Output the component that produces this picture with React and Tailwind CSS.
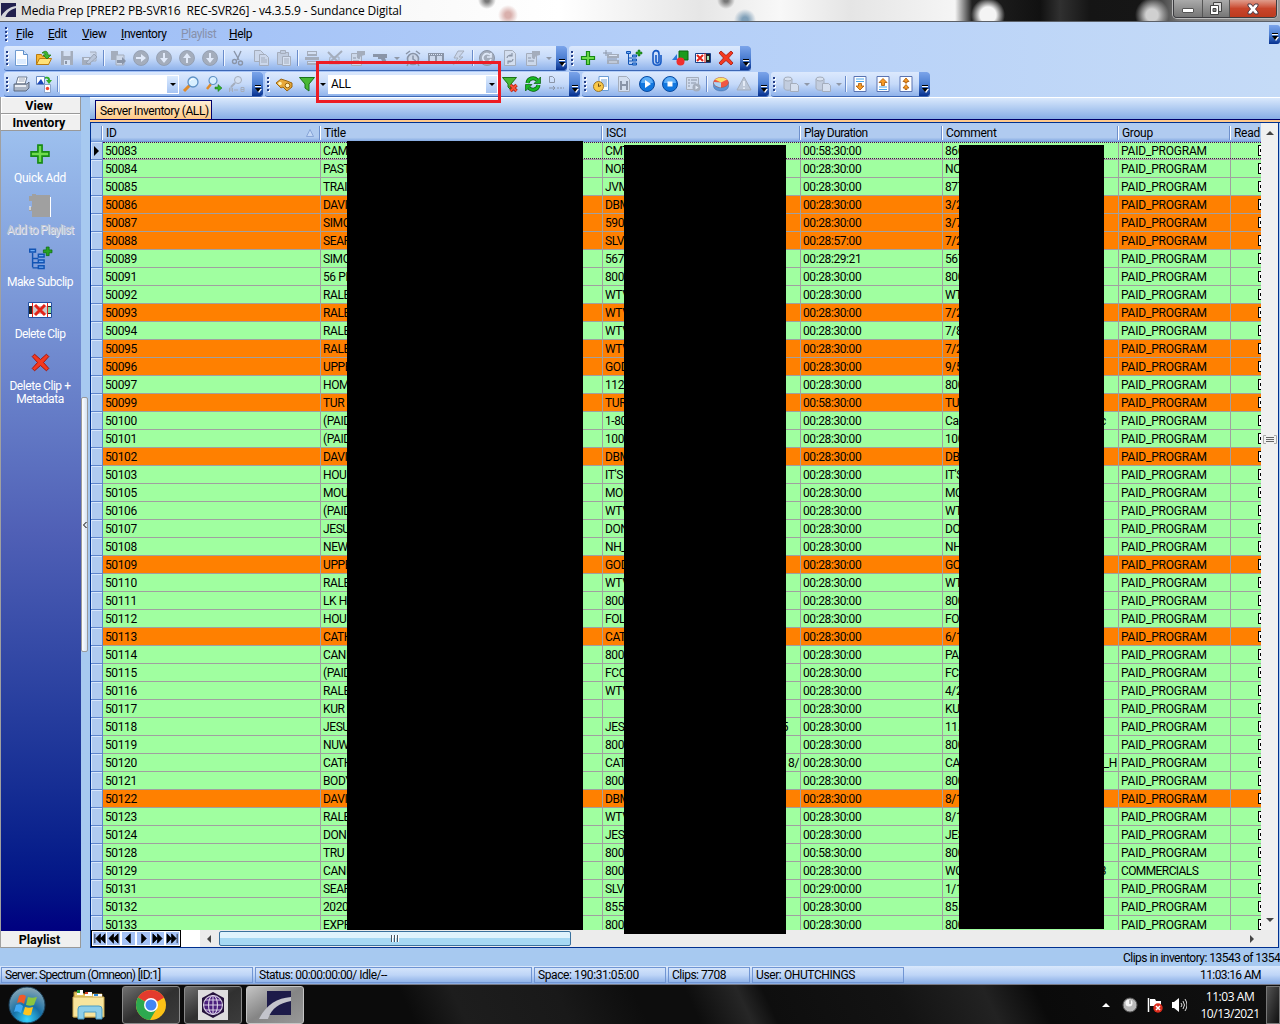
import React from "react";

const G = "#a4adbc";
const D = "#8a95a8";

const ICONS = {
  new: <><path d="M2.500 .5h8l4 4v11h-12z" fill="#fff" stroke="#6f9bd0" /><path d="M4 9h9v5H4z" fill="#dcecff" /><path d="M10.500 .5v4h4" fill="#cfe2fa" stroke="#5b8cc8" /></>,
  open: <><path d="M.5 14.500v-10h5l1 2h6v8z" fill="#f7b733" stroke="#b97b10" /><path d="M.5 14.500l3-6h12l-3 6z" fill="#ffe277" stroke="#b97b10" /><path d="M6 3c3-3 6-2 6 2h3l-4 4-4-4h2c0-2-1-2-3-2z" fill="#3fb52c" stroke="#17730f" strokeWidth=".7" /></>,
  save: <><path d="M2 1h12v14H2z" fill={G} /><path d="M4.500 1h7v5h-7zM5 10h6v5H5z" fill="#d3dff2" /><path d="M6 11h2v3H6z" fill={D} /></>,
  saveas: <><path d="M0 7h9v8H0z" fill={G} /><path d="M2 8h5v2H2z" fill="#d8e3f4" /><path d="M8 2h6v9H9" fill="#cbd7ea" stroke={G} /><path d="M4 13l8-9 3 3-8 7z" fill="#b9c5d9" stroke={D} strokeWidth=".7" /></>,
  copyout: <><path d="M1 1h7v9H1z" fill={G} /><path d="M6 5h8v10H6z" fill="#cdd8e9" stroke={G} /><path d="M7 10h5V7l4 4-4 4v-2H7z" fill={D} /></>,
  right: <><circle cx="8" cy="8" r="7.500" fill={G} stroke={D} strokeWidth=".7" /><path d="M3 7h5V4l5 4-5 4V9H3z" fill="#e1eafa" /></>,
  down: <><circle cx="8" cy="8" r="7.500" fill={G} stroke={D} strokeWidth=".7" /><path d="M7 3h2v5h3l-4 5-4-5h3z" fill="#e1eafa" /></>,
  up: <><circle cx="8" cy="8" r="7.500" fill={G} stroke={D} strokeWidth=".7" /><path d="M7 13h2V8h3L8 3 4 8h3z" fill="#e1eafa" /></>,
  cut: <g fill="none" stroke={D} strokeWidth="1.400"><path d="M4 1l5 9M11 1L7 10" /><circle cx="4.500" cy="11.500" r="2" /><circle cx="10.500" cy="13" r="2" /></g>,
  copy: <g fill="#cbd7eb" stroke={G}><path d="M1.500 .5h6l3 3v8h-9z" /><path d="M6.500 4.500h6l3 3v8h-9z" /><path d="M8 8h4M8 10h6M8 12h6" /></g>,
  paste: <g fill="#c0ccdf" stroke={G}><path d="M1.500 2.500h11v12h-11z" /><path d="M4.500 .5h5v3h-5z" /><path d="M6.500 6.500h8v9h-8z" fill="#d5e0f1" /><path d="M8 9h5M8 11h5M8 13h5" /></g>,
  printer0: <><path d="M3 1h10v5H3zM1 7h14v3H1zM3 11h10v4H3z" fill={G} /><path d="M4 2h8v2H4zM4 12h8v1H4z" fill="#d3dff2" /></>,
  xedit: <g stroke={G} strokeWidth="2" fill="none"><path d="M1 2l12 12M15 1L3 12" /><path d="M3 7h9v7H2z" strokeWidth="1" /></g>,
  card: <><path d="M1.500 3.500h10v12h-10z" fill="#ccd8ea" stroke={G} /><path d="M3 8h3M3 11h6M8 8h2" stroke={D} /><path d="M7 1h8v4l-4 1-2 3-2-1z" fill={G} /></>,
  gun: <path d="M0 4h14v4h-2l2 5h-4L8 9H5V7H0z" fill={D} />,
  clock: <><circle cx="8" cy="9" r="5.500" fill="#cbd6e8" stroke={D} strokeWidth="1.600" /><path d="M1 4l4-3M11 1l4 3M8 5.500V9l3 2M3 14l-1 2M13 14l1 2" stroke={D} strokeWidth="1.500" fill="none" /></>,
  film: <><path d="M0 3h16v10H0z" fill={D} /><path d="M2 6h5v5H2zM9 6h5v5H9z" fill="#cbd7eb" /><path d="M1 4.500h14" stroke="#dbe6f8" strokeDasharray="1 1" /></>,
  bolt: <path d="M13 1H7L3 8h4l-5 7L12 7H8z" fill="#cbd7eb" stroke={G} />,
  refresh0: <><circle cx="8" cy="8" r="7.500" fill={G} stroke={D} /><path d="M11 5a4.200 4.200 0 1 0 1 4M12 3v4H8" stroke="#dfe9f9" strokeWidth="1.700" fill="none" /></>,
  docref: <><path d="M2.500 .5h8l3 3v12h-11z" fill="#d3deef" stroke={G} /><path d="M5 8a3 3 0 0 1 5-2M11 9a3 3 0 0 1-5 2M10 3v3H7M6 14v-3h3" fill="none" stroke={D} strokeWidth="1.200" /></>,
  plus: <path d="M6.500 1.500h3v5h5v3h-5v5h-3v-5h-5v-3h5z" fill="#6fdc4c" stroke="#178a14" strokeWidth="1.200" />,
  list0: <><path d="M4 4h12v4H4zM4 10h12v4H4z" fill={G} /><path d="M6 5.500h8M6 12h8" stroke="#dce6f6" /><path d="M3 0v6M0 3h9M4 9h10" stroke={D} /></>,
  tree: <><path d="M2.500 4v10M2.500 8h4M2.500 11h4M2.500 14.500h4" stroke="#1254b4" fill="none" /><path d="M.5 1.500h4v2h-4zM6.500 5h4v2h-4zM6.500 9h4v2h-4zM6.500 13h4v2h-4z" fill="#6caaf5" stroke="#1254b4" /><path d="M12 0h2v2h2v2h-2v2h-2V4h-2V2h2z" fill="#27a321" stroke="#0d6a0d" strokeWidth=".5" /></>,
  clip: <path d="M12 5v6.500c0 5-8 5-8 0V4c0-4.500 6-4.500 6 0v7.500c0 2-3 2-3 0V5" fill="none" stroke="#1559c4" strokeWidth="1.600" />,
  shapes: <><path d="M0 10l5-6v6z" fill="#2b78d9" /><path d="M7 1h9v9H7z" fill="#1a9a1c" stroke="#0b650d" /><circle cx="8.500" cy="11.500" r="4" fill="#ef2f2f" /></>,
  delclip: <><path d="M.5 3.500h15v9H.5z" fill="#fff" stroke="#173e87" /><path d="M11 4h4v8h-4z" fill="#222" /><path d="M12 6h2v4h-2z" fill="#9fe2b1" /><path d="M2 5l6 6M8 5l-6 6" stroke="#e32419" strokeWidth="2" /><path d="M10 3v10" stroke="#d21a10" /></>,
  x: <path d="M3 1l5 4.500L13 1l2 2-4.500 5L15 13l-2 2-5-4.500L3 15l-2-2 4.500-5L1 3z" fill="#f5391f" stroke="#a51408" strokeWidth=".8" />,
  print: <><path d="M5 1h9l-2 7H3z" fill="#fff" stroke="#6c7a90" /><path d="M1 8h13l2-2v6l-3 3H1z" fill="#aab4c4" stroke="#4a566b" strokeWidth=".8" /><path d="M2 9h11v2H2z" fill="#e9edf4" /><path d="M6 3h6M5.500 5h6" stroke="#9aa5b8" /></>,
  convert: <><path d="M.5 .5h8v8h-8z" fill="#fff" stroke="#6789c4" /><path d="M1 8l4-5 3 5z" fill="#1b47b8" /><path d="M8.500 8.500h6v8h-6z" fill="#fff" stroke="#8ba3c9" /><circle cx="11.500" cy="12.500" r="1.700" fill="#f2432e" /><path d="M9 1c4-1 5 1 5 3h2l-3 4-3-4h2c0-1-1-2-3-1z" fill="#2fac25" /></>,
  search: <><path d="M7 9l-6 6" stroke="#e08a28" strokeWidth="3" /><circle cx="10" cy="6" r="5" fill="#d8efff" stroke="#5f91c4" strokeWidth="1.300" /><path d="M7 5c1-2 3-2 4-2" stroke="#fff" fill="none" /></>,
  searchnext: <><path d="M5 8l-4 5" stroke="#e08a28" strokeWidth="2.500" /><circle cx="7" cy="4.500" r="4" fill="#d8efff" stroke="#5f91c4" strokeWidth="1.200" /><path d="M9 11h3V8.500l4 3.500-4 3.500V13H9z" fill="#35b32c" stroke="#0d6a0d" strokeWidth=".5" /></>,
  searchab: <><path d="M6 7l-4 4" stroke={G} strokeWidth="2" /><circle cx="9" cy="4" r="3.500" fill="#d4e0f2" stroke={G} /><path d="M.5 16v-4h3v4M.5 14h3M5 14h4M12 11.500h3v4h-3zM12 13.500h3" fill="none" stroke={G} /></>,
  binoc: <><path d="M0 7l5-4 6 2 5 2v4l-5 4-4-4-2 1z" fill="#e8a93a" stroke="#9a6410" /><circle cx="11.500" cy="9.500" r="2.300" fill="#fff2c0" stroke="#9a6410" /><circle cx="4" cy="7.500" r="1.800" fill="#fff0b0" /></>,
  funnel: <path d="M.5 1.500h15L10 8v7l-4-3V8z" fill="#49b834" stroke="#1b7318" />,
  funnelx: <><path d="M.5 1.500h14L9 8v6l-3-3V8z" fill="#49b834" stroke="#1b7318" /><path d="M8.500 9l6 6M14.500 9l-6 6" stroke="#a51408" strokeWidth="3.400" /><path d="M8.500 9l6 6M14.500 9l-6 6" stroke="#fa5138" strokeWidth="2" /></>,
  refresh: <><path d="M2.500 7a5.500 5.500 0 0 1 9.500-3M13.500 9a5.500 5.500 0 0 1-9.500 3" stroke="#075c0b" strokeWidth="4" fill="none" /><path d="M2.500 7a5.500 5.500 0 0 1 9.500-3M13.500 9a5.500 5.500 0 0 1-9.500 3" stroke="#19b924" strokeWidth="2.500" fill="none" /><path d="M15.500 1v6.500H9zM.5 15V8.500H7z" fill="#19b924" stroke="#075c0b" strokeWidth=".7" /></>,
  dots0: <path d="M1.500 .5h3l2 2v4h-5zM1 12h6M5 10l2 2-2 2M9 12h2M12 12h2M15 12h1" stroke={D} fill="none" />,
  clockdoc: <><path d="M6 .5h9.500v14H6z" fill="#fff" stroke="#6b9cd5" /><path d="M8 4h6M8 6h6M10 8h4M11 10h3" stroke="#6b9cd5" /><circle cx="5.500" cy="10.500" r="5" fill="#fac848" stroke="#98742a" /><path d="M5.500 7.500v3l2.500-1" stroke="#704b12" fill="none" /></>,
  filmdoc: <><path d="M2.500 .5h8l3 3v12h-11z" fill="#d3deef" stroke={G} /><path d="M5 5v9M11 5v9M5 9h6" stroke={D} strokeWidth="2" /></>,
  play: <><circle cx="8" cy="8" r="7.500" fill="#1277df" stroke="#0a4aa0" /><path d="M2 7a6 6 0 0 1 12 0z" fill="#5eaef7" /><path d="M6 4l6 4-6 4z" fill="#fff" /></>,
  stop: <><circle cx="8" cy="8" r="7.500" fill="#1277df" stroke="#0a4aa0" /><path d="M2 7a6 6 0 0 1 12 0z" fill="#5eaef7" /><path d="M5.500 5.500h5v5h-5z" fill="#fff" /></>,
  listplay: <><path d="M1.500 1.500h12v12h-12z" fill="#d0dbed" stroke={G} /><path d="M3 4h2M6 4h6M3 7h2M6 7h5M3 10h2" stroke={D} /><circle cx="11.500" cy="11.500" r="4" fill={G} /><path d="M10.500 9.500l3 2-3 2z" fill="#e5edfa" /></>,
  pie: <><path d="M.5 6.500v4c1 6 14 6 15 0v-4z" fill="#5a93d6" stroke="#46689c" strokeWidth=".5" /><ellipse cx="8" cy="6.500" rx="7.500" ry="5" fill="#f05742" stroke="#9a5540" strokeWidth=".5" /><path d="M8 6.500L2 3.500C5 1 11 1 14 3.500z" fill="#f8e36a" /><path d="M8 6.500L.7 6c0 3 3 5 7.300 5.400z" fill="#a9d3f7" /></>,
  warn: <><path d="M8 1l7 13H1z" fill="#bcc7d8" stroke={G} /><path d="M8 5v5M8 11.500v1.500" stroke="#e8effa" strokeWidth="1.800" /></>,
  db: <><path d="M1 3v9c0 3 8 3 8 0V3" fill="#c2cddf" stroke={G} /><ellipse cx="5" cy="3" rx="4" ry="2" fill="#d7e1f0" stroke={G} /><path d="M7.500 7.500h6l2 2v6h-8z" fill="#d5dfef" stroke={G} /></>,
  pgdown: <><path d="M2 .5h12v15H2z" fill="#fff" stroke="#5873b2" /><path d="M4 3h8M4 5.500h8" stroke="#4aa6ec" /><path d="M6.500 7.500h3V10h2.500l-4 4-4-4h2.500z" fill="#f89b24" stroke="#a85808" strokeWidth=".8" /></>,
  pgup: <><path d="M2 .5h12v15H2z" fill="#fff" stroke="#5873b2" /><path d="M4 11h8M4 13.500h8" stroke="#4aa6ec" /><path d="M6.500 9.500h3V6.500h2.500l-4-4-4 4h2.500z" fill="#f89b24" stroke="#a85808" strokeWidth=".8" /></>,
  pgboth: <><path d="M2 .5h12v15H2z" fill="#fff" stroke="#5873b2" /><path d="M8 2l3 3.500H9V7H7V5.500H5zM8 8.500l3 3.500H9v1.500H7V12H5z" fill="#f89b24" stroke="#a85808" strokeWidth=".8" /></>,
};

const Icon = ({ n, size = 16 }) => (
  <svg width={size} height={size} viewBox="0 0 16 16" className="shrink-0 overflow-visible">{ICONS[n]}</svg>
);

const Grip = () => (
  <span className="ml-[2px] flex shrink-0 flex-col gap-[2px] w-[2px]">
    {[0, 1, 2, 3].map((i) => <span key={i} className="h-[2px] w-[2px] bg-[#27418a] shadow-[1px_1px_0_#fff]" />)}
  </span>
);

const Caret = ({ dark }) => (
  <span className="flex w-[9px] shrink-0 justify-center">
    <span className={dark ? "h-0 w-0 border-x-[3px] border-t-[3px] border-x-transparent border-t-black" : "h-0 w-0 border-x-[3px] border-t-[3px] border-x-transparent border-t-[#8f98a8]"} />
  </span>
);

const Cap = () => (
  <span className="flex h-full w-[11px] shrink-0 flex-col items-center justify-end gap-px rounded-r-[3px] bg-linear-to-b from-[#7ba4ea] via-[#4d7fd2] to-[#06308f] pb-[3px]">
    <span className="h-[2px] w-[6px] border-b border-white bg-black" />
    <svg width="8" height="5"><path d="M2 1h6L5 5z" fill="#fff" /><path d="M1 0h6L4 4z" fill="#000" /></svg>
  </span>
);

function Items({ list }) {
  return list.map((n, i) => {
    if (n === "|") return <span key={i} className="mx-[1.5px] h-[16px] w-[2px] shrink-0 border-l border-[#6a8ccb] bg-[#f1f7ff]" />;
    if (n === "v") return <Caret key={i} />;
    return <span key={i} className="flex w-[23px] shrink-0 justify-center"><Icon n={n} /></span>;
  });
}

const Combo = ({ text }) => (
  <span className="flex h-[19px] grow items-center bg-white">
    <span className="grow pl-[3px]">{text}</span>
    <span className="mr-px flex h-[17px] w-[11px] items-center justify-center bg-linear-to-b from-[#dcebfe] to-[#a6c4f3]"><Caret dark /></span>
  </span>
);

const Bar = ({ className, children }) => (
  <div className={"flex h-[25px] shrink-0 items-center overflow-hidden rounded-[3px] border-b border-[#3d67b5] bg-linear-to-b from-[#dce9fd] via-[#c6daf9] to-[#90b3eb] " + className}>
    <Grip />
    {children}
    <span className="grow" />
    <Cap />
  </div>
);

// id | highlighted | title | isci | duration | comment | isci tail | comment tail
const ROWS = `50083||CAM|CMT|00:58:30:00|866
50084||PAST|NOR|00:28:30:00|NOR
50085||TRAI|JVM|00:28:30:00|877
50086|o|DAVI|DBM|00:28:30:00|3/2
50087|o|SIMO|590|00:28:30:00|3/7
50088|o|SEAR|SLV|00:28:57:00|7/2
50089||SIMO|567|00:28:29:21|567
50091||56 PE|800|00:28:30:00|800
50092||RALE|WTV|00:28:30:00|WT
50093|o|RALE|WTV|00:28:30:00|7/2
50094||RALE|WTV|00:28:30:00|7/8
50095|o|RALE|WTV|00:28:30:00|7/2
50096|o|UPPE|GOD|00:28:30:00|9/5
50097||HOM|112|00:28:30:00|800
50099|o|TUR|TUR|00:58:30:00|TUR
50100||(PAID|1-80|00:28:30:00|Cal||c
50101||(PAID|100|00:28:30:00|100
50102|o|DAVI|DBM|00:28:30:00|DBI
50103||HOU|IT'S|00:28:30:00|IT'S
50105||MOU|MOI|00:28:30:00|MOI
50106||(PAID|WTV|00:28:30:00|WT
50107||JESU|DON|00:28:30:00|DOI
50108||NEW|NH_|00:28:30:00|NH_
50109|o|UPPE|GOD|00:28:30:00|GOI
50110||RALE|WTV|00:28:30:00|WT
50111||LK H|800|00:28:30:00|800
50112||HOU|FOL|00:28:30:00|FOI
50113|o|CATH|CAT|00:28:30:00|6/1
50114||CANI|800|00:28:30:00|PAI
50115||(PAID|FCC|00:28:30:00|FCI
50116||RALE|WTV|00:28:30:00|4/2
50117||KUR||00:28:30:00|KUI
50118||JESU|JES|00:28:30:00|11.|5
50119||NUW|800|00:28:30:00|800
50120||CATH|CAT|00:28:30:00|CAT|8/|_H
50121||BODY|800|00:28:30:00|800
50122|o|DAVI|DBM|00:28:30:00|8/1
50123||RALE|WTV|00:28:30:00|8/1
50124||DON|JES|00:28:30:00|JES
50128||TRU|800|00:58:30:00|800
50129||CANI|800|00:28:30:00|WO||3
50131||SEAR|SLV|00:29:00:00|1/1
50132||2020|855|00:28:30:00|855
50133||EXPR|800|00:28:30:00|800`.split("\n").map((l) => l.split("|"));

const Cell = ({ w, children, tail, tailPad = "pr-0" }) => (
  <div className={"flex h-full shrink-0 items-center justify-between overflow-hidden border-r border-b border-[#a0a0a0] pl-[2px] whitespace-nowrap " + w}>
    <span>{children}</span>
    {tail && <span className={tailPad}>{tail}</span>}
  </div>
);

function Row({ r, i }) {
  return (
    <div className="flex h-[18px] shrink-0">
      <div className="flex w-[12px] shrink-0 items-center justify-center border-r border-b border-[#5f86cc] bg-[#b0cbf0] shadow-[inset_1px_1px_0_#d9e8fc]">
        {i === 0 && <span className="h-0 w-0 border-y-[5px] border-l-[5px] border-y-transparent border-l-black" />}
      </div>
      <div className={"relative flex grow overflow-hidden " + (r[1] ? "bg-[#ff8000]" : "bg-[#a0ffa0]")}>
        <Cell w="w-[218px]">{r[0]}</Cell>
        <Cell w="w-[282px]">{r[2]}</Cell>
        <Cell w="w-[198px]" tail={r[6]} tailPad={r[6] === "5" ? "pr-[12px]" : "pr-[1px]"}>{r[3]}</Cell>
        <Cell w="w-[142px]">{r[4]}</Cell>
        <Cell w="w-[176px]" tail={r[7]} tailPad={r[7] === "_H" ? "pr-[1px]" : "pr-[12px]"}>{r[5]}</Cell>
        <Cell w="w-[112px] tracking-[-0.2px]">{r[0] === "50129" ? <span className="tracking-[-0.6px]">COMMERCIALS</span> : "PAID_PROGRAM"}</Cell>
        <div className="flex grow items-center justify-end border-b border-[#a0a0a0]">
          <span className="flex h-[11px] w-[3px] items-center justify-end border-y border-l border-black bg-white"><span className="h-[3px] w-px bg-black" /></span>
        </div>
        {i === 0 && <div className="absolute inset-x-0 top-0 h-[17px] border-y border-dotted border-[#500050]" />}
      </div>
    </div>
  );
}

const Head = ({ w, children, sort }) => (
  <div className={"flex h-full shrink-0 items-center overflow-hidden pl-[3px] whitespace-nowrap " + w}>
    <span className="grow">{children}</span>
    {sort && <svg width="8" height="8" className="mr-[5px]"><path d="M4 .5L7.500 7.500h-7z" fill="#c3d8f6" stroke="#7c9ad0" strokeWidth=".8" /></svg>}
    <span className="h-[14px] w-[2px] shrink-0 border-l border-[#6d8fcb] bg-white" />
  </div>
);

const Action = ({ icon, children }) => (
  <div className="flex h-[52px] shrink-0 flex-col items-center">
    <div className="flex h-[24px] shrink-0 items-center">{icon}</div>
    <div className="mt-[6px] shrink-0 text-center leading-[13px] whitespace-pre text-white">{children}</div>
  </div>
);

const NAV = ["M2 1v10M8 1L3 6l5 5zM13 1L8 6l5 5z", "M7 1L2 6l5 5zM12 1L7 6l5 5z", "M9 1L4 6l5 5z", "M5 1l5 5-5 5z", "M2 1l5 5-5 5zM7 1l5 5-5 5z", "M1 1l5 5-5 5zM6 1l5 5-5 5zM12 1v10"];

const Panel = ({ w, children }) => (
  <div className={"flex h-[16px] shrink-0 items-center border border-[#7095d3] pl-[3px] whitespace-pre " + w}>{children}</div>
);

const Swoosh = ({ className }) => (
  <svg viewBox="0 0 32 28" className={className}>
    <path d="M8 0h24v24H8z" fill="#1d1b49" />
    <path d="M0 28C7 14 18 7 32 6v4C20 12 12 18 9 28z" fill="#c3c4cb" />
  </svg>
);

const TaskButton = ({ active, children }) => (
  <div className={"flex h-[38px] w-[58px] items-center justify-center rounded-[3px] border " + (active ? "border-[#c5c5c5] bg-linear-to-br from-[#c4c4c4] via-[#858585] to-[#989898]" : "border-[#8a8a8a] bg-linear-to-br from-[#707070] via-[#303030] to-[#3c3c3c]")}>{children}</div>
);

export default function App() {
  return (
    <div className="relative flex h-[1024px] w-[1280px] flex-col overflow-hidden bg-[#a7c9f0] font-['Roboto','Liberation_Sans',sans-serif] text-[12px] leading-[14px] tracking-[-0.4px] text-black">
      {/* Title bar */}
      <div className="flex h-[22px] shrink-0 justify-between border-b border-[#5b6068] bg-[radial-gradient(circle_at_988px_15px,#f4f4f4_8px,transparent_17px),radial-gradient(circle_at_1152px_15px,#d0d0d0_6px,transparent_17px),radial-gradient(circle_at_745px_20px,#7f9fb8_3px,transparent_11px),radial-gradient(circle_at_508px_15px,#d9b0ac_3px,transparent_10px),radial-gradient(circle_at_487px_0px,#777_2px,transparent_9px),radial-gradient(circle_at_726px_0px,#777_2px,transparent_9px),linear-gradient(90deg,#dcdcdc_0,#f2f2f2_80px,#f9f9f9_400px,#fff_560px,#e6e6e6_700px,#f8f8f8_780px,#e5e5e5_850px,#f5f5f5_955px,#222_972px,#111_1040px,#303030_1060px,#151515_1090px,#161616_1140px,#777_1180px,#999_1280px)]">
        <div className="flex items-center">
          <svg width="16" height="16" viewBox="0 0 16 16"><path d="M1 0h15v14H1z" fill="#22204e" /><path d="M0 15C4 8 9 4 16 3v2C10 7 7 9 5 15z" fill="#d5d6dc" /></svg>
          <span className="ml-[5px] font-['Open_Sans','Noto_Sans',sans-serif] text-[12px] tracking-[-0.14px] whitespace-pre">Media Prep [PREP2 PB-SVR16  REC-SVR26] - v4.3.5.9 - Sundance Digital</span>
        </div>
        <div className="mr-[3px] flex h-[18px] w-[104px] overflow-hidden rounded-b-[4px] border border-t-0 border-[#3c3c40] shadow-[0_0_0_1px_#bbb]">
          <div className="flex w-[29px] items-end justify-center border-r border-[#555] bg-linear-to-b from-[#aaa] to-[#767676] pb-[4px]"><span className="h-[5px] w-[12px] rounded-[1px] border border-[#555] bg-white" /></div>
          <div className="flex w-[27px] items-center justify-center border-r border-[#555] bg-linear-to-b from-[#aaa] to-[#767676]">
            <svg width="14" height="13"><path d="M4.500 .5h8v9h-8z" fill="#ddd" stroke="#444" /><path d="M1.500 3.500h8v9h-8z" fill="#fff" stroke="#444" /><path d="M4 6.500h3v3H4z" fill="#888" stroke="#444" /></svg>
          </div>
          <div className="flex grow items-center justify-center bg-linear-to-b from-[#df9c8c] via-[#c8452b] to-[#bc3a1e]">
            <svg width="14" height="12" viewBox="0 0 14 12"><path d="M2 1h3l2 2.500L9 1h3v2L9.500 6 12 9v2H9L7 8.500 5 11H2V9l2.500-3L2 3z" fill="#fff" stroke="#4d3b46" /></svg>
          </div>
        </div>
      </div>

      {/* Menu and toolbars */}
      <div className="flex h-[75px] shrink-0 flex-col bg-linear-to-r from-[#9dbdf6] via-[#b3cef8] to-[#c5dbf7]">
        <div className="flex h-[24px] items-center justify-between">
          <div className="flex items-center">
            <span className="ml-[3px]"><Grip /></span>
            {[["F", "ile", "ml-[9px] w-[32px]"], ["E", "dit", "w-[34px]"], ["V", "iew", "w-[39px]"], ["I", "nventory", "w-[60px]"], ["P", "laylist", "w-[48px] text-[#8791ab]"], ["H", "elp", ""]].map(([a, b, c]) => (
              <span key={a} className={c + " tracking-[-0.4px]"}><u>{a}</u>{b}</span>
            ))}
          </div>
          <div className="h-[19px]"><Cap /></div>
        </div>
        <div className="flex h-[26px] gap-[2px] pl-[4px]">
          <Bar className="w-[563px]"><span className="w-px shrink-0" />
            <Items list={["new", "open", "save", "saveas", "|", "copyout", "right", "down", "up", "down", "|", "cut", "copy", "paste", "|", "printer0", "xedit", "card", "gun", "v", "clock", "film", "bolt", "|", "refresh0", "docref", "card", "v"]} />
          </Bar>
          <Bar className="w-[182px]"><span className="w-[3px] shrink-0" /><Items list={["plus", "list0", "tree", "clip", "shapes", "delclip", "x"]} /></Bar>
        </div>
        <div className="flex h-[25px] gap-[2px] pl-[4px]">
          <Bar className="w-[259px]"><span className="w-px shrink-0" /><Items list={["print", "convert", "|"]} />
            <span className="flex w-[119px] shrink-0"><Combo /></span>
            <Items list={["search", "searchnext", "searchab"]} />
          </Bar>
          <Bar className="w-[315px]"><span className="w-[3px] shrink-0" /><Items list={["binoc", "funnel"]} /><Caret dark />
            <span className="ml-px flex w-[170px] shrink-0"><Combo text="ALL" /></span>
            <Items list={["funnelx", "refresh", "dots0"]} />
          </Bar>
          <Bar className="w-[187px]"><span className="w-[3px] shrink-0" /><Items list={["clockdoc", "filmdoc", "play", "stop", "listplay", "|", "pie", "warn"]} /></Bar>
          <Bar className="w-[159px]"><span className="w-[4px] shrink-0" /><Items list={["db", "v", "db", "v", "|", "pgdown", "pgup", "pgboth"]} /></Bar>
        </div>
      </div>

      {/* Main area */}
      <div className="flex h-[851px] shrink-0">
        <div className="flex w-[81px] shrink-0 flex-col border-l border-[#a0a0a0]">
          {["View", "Inventory"].map((t) => (
            <div key={t} className="h-[17px] shrink-0 border-r border-b border-[#999] bg-[#f0f0f0] pt-[2px] pr-[3px] text-center text-[12.500px] font-bold tracking-[0px] shadow-[inset_1px_1px_0_#fff]">{t}</div>
          ))}
          <div className="flex grow flex-col bg-linear-to-b from-[#9dc0ee] via-[#5060b6] to-[#000080] pt-[11px] pr-[2px] tracking-[-0.45px]">
            <Action icon={<Icon n="plus" size={22} />}><span className="tracking-[-0.3px]">Quick Add</span></Action>
            <Action icon={<svg width="24" height="24"><path d="M1 2h3V0h4v1h14v22H4v-6H1v-4h3V7H1z" fill="#a0a0a0" /><path d="M22.500 3v20M2 12v4" stroke="#fff" /></svg>}><span className="tracking-[-0.65px] text-[#c0c6d2] [text-shadow:1px_1px_0_#e8ebf2]">Add to Playlist</span></Action>
            <Action icon={<Icon n="tree" size={23} />}>Make Subclip</Action>
            <Action icon={<svg width="24" height="18"><path d="M.5 1.500h23v15H.5z" fill="#fff" stroke="#2452a2" /><path d="M1 5h22v8H1z" fill="#222" /><path d="M5 5h14v8H5z" fill="#ccc" /><path d="M20 6h3v6h-3z" fill="#7fd7a0" /><path d="M4.500 2v14M19.500 2v14" stroke="#e32419" /><path d="M7 4l10 10M17 4L7 14" stroke="#e32419" strokeWidth="3" /></svg>}><span className="tracking-[-0.6px]">Delete Clip</span></Action>
            <Action icon={<Icon n="x" size={19} />}>{"Delete Clip +\nMetadata"}</Action>
          </div>
          <div className="h-[17px] shrink-0 border-r border-b border-[#999] bg-[#f0f0f0] pt-[2px] pr-[2px] text-center text-[12.500px] font-bold tracking-[0px]">Playlist</div>
        </div>

        <div className="flex w-[9px] shrink-0 flex-col bg-[#a7c9f0] pt-[300px]">
          <div className="flex h-[255px] w-[7px] items-center justify-center rounded-[2px] border border-[#9a9a9a] bg-linear-to-r from-white to-[#d5e3f3]">
            <svg width="4" height="6"><path d="M3.500 0L.5 3l3 3" fill="none" stroke="#000" /></svg>
          </div>
        </div>

        <div className="flex w-[1190px] shrink-0 flex-col">
          <div className="flex h-[23px] shrink-0 items-end border-t border-b border-t-white border-b-[#00006b] bg-linear-to-b from-[#d9e8fc] to-[#87aee5] pl-[5px]">
            <div className="flex h-[19px] w-[117px] items-center border border-b-0 border-[#00006b] bg-linear-to-b from-[#ffefd5] to-[#ffca85] pt-px pl-[4px] tracking-[-0.42px] whitespace-nowrap">Server Inventory (ALL)</div>
          </div>
          <div className="h-[3px] shrink-0 border-b border-[#00308f] bg-[#ffc98b]" />
          <div className="flex h-[825px] w-[1189px] shrink-0 flex-col border-x border-b border-[#00308f]">
            <div className="flex h-[807px] shrink-0">
              <div className="relative flex w-[1170px] shrink-0 flex-col overflow-hidden">
                <div className="flex h-[19px] shrink-0 border-b border-[#6d94d6] bg-linear-to-b from-[#b0cbf0] from-80% to-[#86abe2] pt-px tracking-[-0.3px]">
                  <Head w="w-[12px]" />
                  <Head w="w-[218px]" sort>ID</Head>
                  <Head w="w-[282px]">Title</Head>
                  <Head w="w-[198px]">ISCI</Head>
                  <Head w="w-[142px] tracking-[-0.55px]">Play Duration</Head>
                  <Head w="w-[176px]">Comment</Head>
                  <Head w="w-[112px]">Group</Head>
                  <div className="flex items-center pl-[3px]">Read</div>
                </div>
                {ROWS.map((r, i) => <Row key={r[0]} r={r} i={i} />)}
              </div>
              <div className="flex w-[17px] shrink-0 flex-col items-center justify-between bg-[#f0f0f0] py-[8px]">
                <span className="h-0 w-0 border-x-[4px] border-b-[4px] border-x-transparent border-b-[#444]" />
                <svg width="16" height="9" className="-mt-[175px]"><path d="M4 .5H1.500v8H4M12 .5h2.500v8H12" fill="none" stroke="#aaa" /><path d="M4 2.500h8M4 4.500h8M4 6.500h8" stroke="#666" /></svg>
                <span className="h-0 w-0 border-x-[4px] border-t-[4px] border-x-transparent border-t-[#444]" />
              </div>
            </div>
            <div className="flex h-[17px] shrink-0 bg-[#ececec]">
              <div className="flex h-[17px] w-[90px] shrink-0 items-center justify-around border border-black bg-white">
                {NAV.map((d) => <span key={d} className="bg-[#a5c2f5]"><svg width="13" height="13" viewBox="0 -0.5 14 13"><path d={d} fill="#000" stroke="#000" strokeWidth=".8" /></svg></span>)}
              </div>
              <div className="flex w-[38px] shrink-0 items-center justify-end bg-linear-to-r from-white from-50% to-[#ececec] to-50% pr-[8px]"><span className="h-0 w-0 border-y-[4px] border-r-[4px] border-y-transparent border-r-[#444]" /></div>
              <div className="mt-[1px] flex h-[15px] w-[352px] shrink-0 items-center justify-center gap-px rounded-[2px] border border-[#3a719d] bg-linear-to-b from-[#dff3fd] from-45% to-[#a6d8f3] to-50%">
                {[0, 1, 2].map((i) => <span key={i} className="h-[7px] w-[2px] border-l border-[#4a5560] bg-white" />)}
              </div>
              <div className="flex grow items-center justify-end pr-[24px]"><span className="h-0 w-0 border-y-[4px] border-l-[4px] border-y-transparent border-l-[#444]" /></div>
            </div>
          </div>
        </div>
      </div>

      <div className="flex h-[18px] shrink-0 items-center overflow-hidden pt-[2px] pl-[1123px] tracking-[-0.52px] whitespace-nowrap">Clips in inventory: 13543 of 13543</div>

      <div className="flex h-[18px] shrink-0 items-center gap-[2px] bg-linear-to-b from-[#d9e8fc] via-[#bed5f7] to-[#86abe4] pl-px tracking-[-0.4px]">
        <Panel w="w-[252px] tracking-[-0.7px]">Server: Spectrum (Omneon) [ID:1]</Panel>
        <Panel w="w-[277px] tracking-[-0.5px]">Status: 00:00:00:00/ Idle/--</Panel>
        <Panel w="w-[132px]">Space: 190:31:05:00</Panel>
        <Panel w="w-[82px] tracking-[-0.5px]">Clips: 7708</Panel>
        <Panel w="w-[152px]">User: OHUTCHINGS</Panel>
        <span className="grow pr-[19px] text-right tracking-[-0.6px]">11:03:16 AM</span>
      </div>

      {/* Taskbar */}
      <div className="flex h-[40px] shrink-0 items-center border-t border-[#777985] bg-[linear-gradient(65deg,#0b0b0b_0,#0b0b0b_32%,#1d1d1d_36%,#191919_44%,#0d0d0d_50%,#0d0d0d_54%,#262626_58%,#0e0e0e_60%,#131313_70%,#222_77%,#0a0a0a_81%,#111_100%)] pl-[8px]">
        <svg width="38" height="38" viewBox="0 0 38 38">
          <defs>
            <radialGradient id="orb" cx=".5" cy=".9" r=".9"><stop offset="0" stopColor="#35d5ff" /><stop offset=".45" stopColor="#176fa5" /><stop offset="1" stopColor="#8ea9b6" /></radialGradient>
          </defs>
          <circle cx="19" cy="19" r="18" fill="url(#orb)" stroke="#1a3e57" />
          <path d="M11 10c3-2 5-1 7 0l-2 8c-2-2-5-2-7-1z" fill="#f05a28" />
          <path d="M20 11c3 1 5 1 9 0l-3 8c-3 1-5 1-8 0z" fill="#8cc63f" />
          <path d="M8 19c3-1 5-1 7 1l-2 7c-2-1-4-2-7-1z" fill="#3fa9f5" />
          <path d="M17 21c3 1 5 1 8 0l-2 8c-3 1-6 0-8-1z" fill="#ffc41f" />
        </svg>
        <svg width="34" height="32" viewBox="0 0 34 32" className="ml-[26px]">
          <path d="M2 3h8l2 2h18v23H2z" fill="#e9c965" stroke="#a98430" /><path d="M5 1h6v5H5z" fill="#fff" /><path d="M5 1h3v3H5z" fill="#29a444" /><path d="M13 3h7v4h-7zM21 5h9v4h-9z" fill="#fff" /><path d="M13 3h3v2h-3z" fill="#d83b22" /><path d="M22 5h4v2h-4z" fill="#2a87d8" />
          <path d="M1 8h31v20H1z" fill="#f8e59d" stroke="#c9a850" />
          <path d="M6 30V20q0-3 3-3h18q3 0 3 3v10h-6v-7H12v7z" fill="#8dcfea" stroke="#4a9cc4" />
        </svg>
        <div className="ml-[16px] flex gap-[4px]">
          <TaskButton>
            <svg width="32" height="32" viewBox="0 0 32 32"><circle cx="16" cy="16" r="15" fill="#fbc116" /><path d="M16 16L3 8.500A15 15 0 0 1 29 8.500z" fill="#e33b2e" /><path d="M3 8.500A15 15 0 0 0 15 31l7-12-6-3z" fill="#2da94f" /><path d="M29 8.500H16v7z" fill="#e33b2e" /><circle cx="16" cy="16" r="7" fill="#fff" /><circle cx="16" cy="16" r="5.500" fill="#4285f4" /></svg>
          </TaskButton>
          <TaskButton>
            <svg width="30" height="30" viewBox="0 0 30 30"><path d="M0 0h30v30H0z" fill="#deddde" /><path d="M15 2l11 6v14l-11 6-11-6V8z" fill="#25123c" /><circle cx="15" cy="15" r="9.500" fill="#4a1f7c" /><g fill="none" stroke="#d9d0e6" strokeWidth="1.100"><circle cx="15" cy="15" r="9.500" /><ellipse cx="15" cy="15" rx="4.500" ry="9.500" /><path d="M15 5v20M5 15h20M7 10h16M7 20h16" /></g></svg>
          </TaskButton>
          <TaskButton active><Swoosh className="h-[28px] w-[32px]" /></TaskButton>
        </div>
        <div className="grow" />
        <span className="h-0 w-0 border-x-[4px] border-b-[4px] border-x-transparent border-b-white" />
        <svg width="16" height="16" className="ml-[12px]"><circle cx="8" cy="8" r="7" fill="#b9b9b9" stroke="#555" /><circle cx="7" cy="6" r="3.500" fill="#f4f4f4" /><path d="M8 3v4" stroke="#777" /></svg>
        <svg width="17" height="16" className="ml-[9px]"><path d="M1.500 1v14" stroke="#fff" strokeWidth="1.500" /><path d="M3 2h5l1 2h5v6H9L8 9H3z" fill="#fff" /><circle cx="11" cy="11" r="4.700" fill="#dc2c1c" /><path d="M9 9l4 4M13 9l-4 4" stroke="#fff" strokeWidth="1.500" /></svg>
        <svg width="16" height="16" className="ml-[7px]"><path d="M1 5h2l5-4v14l-5-4H1z" fill="#fff" /><path d="M10 6q2 2 0 4M12 4q3 4 0 8M14 2q4 6 0 12" fill="none" stroke="#ddd" /></svg>
        <div className="ml-[10px] w-[66px] text-center font-['Open_Sans','Noto_Sans',sans-serif] text-[12px] leading-[17px] tracking-[-0.45px] text-white">11:03 AM<br />10/13/2021</div>
        <div className="ml-[3px] h-[38px] w-[14px] border border-[#777] bg-linear-to-br from-[#555] to-[#111]" />
      </div>

      {/* Redaction blocks and highlight */}
      <div className="absolute top-[141px] left-[347px] h-[789px] w-[236px] bg-black" />
      <div className="absolute top-[145px] left-[624px] h-[789px] w-[162px] bg-black" />
      <div className="absolute top-[145px] left-[959px] h-[784px] w-[145px] bg-black" />
      <div className="absolute top-[61px] left-[316px] h-[42px] w-[185px] border-[3px] border-[#ed1c24]" />
    </div>
  );
}
